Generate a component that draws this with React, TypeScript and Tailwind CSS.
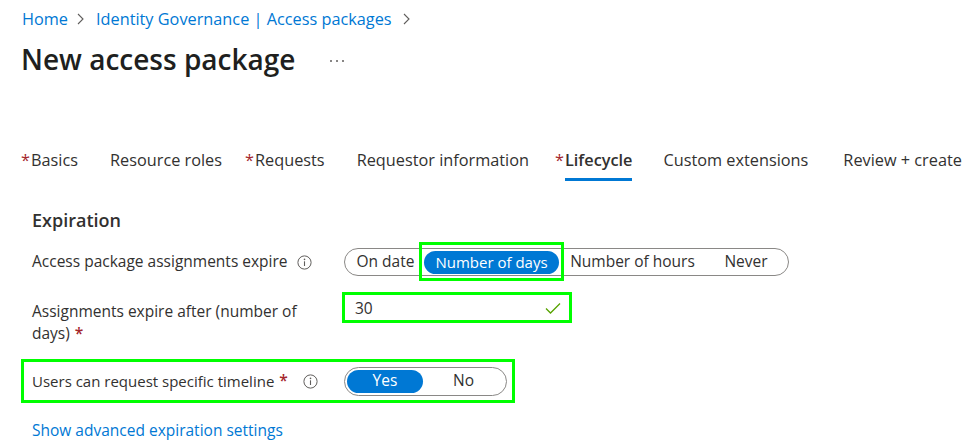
import React from "react";

function Chevron({ ml, mr }: { ml: string; mr: string }) {
  return (
    <svg width="7" height="12" viewBox="0 0 7 12" className={`${ml} ${mr}`}>
      <path d="M1 1 L6 6 L1 11" fill="none" stroke="#605e5c" strokeWidth="1.1" />
    </svg>
  );
}

function Info() {
  return (
    <svg width="15" height="15" viewBox="0 0 15 15">
      <circle cx="7.5" cy="7.5" r="6.6" fill="none" stroke="#605e5c" strokeWidth="1" />
      <line x1="7.5" y1="6.3" x2="7.5" y2="11" stroke="#605e5c" strokeWidth="1.1" />
      <circle cx="7.5" cy="4.4" r="0.8" fill="#605e5c" />
    </svg>
  );
}

const tabs: { label: string; req?: boolean; active?: boolean; ml: string }[] = [
  { label: "Basics", req: true, ml: "ml-0" },
  { label: "Resource roles", ml: "ml-[32px]" },
  { label: "Requests", req: true, ml: "ml-[33px]" },
  { label: "Requestor information", ml: "ml-[32px]" },
  { label: "Lifecycle", req: true, active: true, ml: "ml-[36px]" },
  { label: "Custom extensions", ml: "ml-[31px]" },
  { label: "Review + create", ml: "ml-[35px]" },
];

export default function App() {
  return (
    <div className="w-[978px] h-[447px] overflow-hidden bg-white text-[#323130] font-['Open_Sans','Noto_Sans',sans-serif]">
      {/* Breadcrumb */}
      <div className="flex items-center pl-[22px] pt-[9px] h-[29px] text-[16.3px] leading-[20px] text-[#0078d4]">
        <span>Home</span>
        <Chevron ml="ml-[9px]" mr="mr-[12px]" />
        <span>Identity Governance | Access packages</span>
        <Chevron ml="ml-[11px]" mr="mr-0" />
      </div>

      {/* Title */}
      <div className="flex items-center pl-[21px] mt-[10px] h-[40px]">
        <h1 className="text-[28px] leading-[40px] font-semibold text-[#201f1e]">New access package</h1>
        <div className="ml-[35px] mt-[4px] flex gap-[4px]">
          <span className="w-[2px] h-[2px] rounded-full bg-[#605e5c]" />
          <span className="w-[2px] h-[2px] rounded-full bg-[#605e5c]" />
          <span className="w-[2px] h-[2px] rounded-full bg-[#605e5c]" />
        </div>
      </div>

      {/* Tabs */}
      <div className="flex pl-[31px] mt-[70px] text-[16.3px] leading-[22px]">
        {tabs.map((t) => (
          <div key={t.label} className={`relative pb-[10px] ${t.ml}`}>
            {t.req && (
              <span className="absolute left-[-10px] top-0 text-[#a4262c]">*</span>
            )}
            <span className={t.active ? "font-semibold" : ""}>{t.label}</span>
            {t.active && (
              <span className="absolute left-0 right-0 bottom-0 h-[3px] bg-[#0078d4]" />
            )}
          </div>
        ))}
      </div>

      {/* Content */}
      <div className="pl-[21px] pt-[27px]">
        <div className="pl-[11px] text-[18px] leading-[24px] font-semibold">Expiration</div>

        {/* Row 1 */}
        <div className="flex items-center pl-[11px] mt-[16px] text-[15.5px]">
          <div className="w-[312px] flex items-center">
            <span>Access package assignments expire</span>
            <span className="ml-[9px] flex"><Info /></span>
          </div>
          <div className="flex items-center h-[28px] rounded-full border border-[#8a8886] px-[2px]">
            <span className="w-[77px] text-center">On date</span>
            <span className="relative w-[135px] h-[23px] rounded-full bg-[#0078d4] text-white text-[15px] flex items-center justify-center">
              Number of days
              <span className="absolute left-[-5px] right-[-5px] top-[-9px] bottom-[-7px] border-[3px] border-[#00ff00]" />
            </span>
            <span className="w-[147px] text-center">Number of hours</span>
            <span className="w-[80px] text-center">Never</span>
          </div>
        </div>

        {/* Row 2 */}
        <div className="flex items-start pl-[11px] mt-[18px] text-[15.5px] leading-[22px]">
          <div className="w-[312px] pt-[6px] flex flex-col">
            <span>Assignments expire after (number of</span>
            <div className="flex">
              <span>days)</span>
              <span className="ml-[5px] text-[#a4262c] font-semibold">*</span>
            </div>
          </div>
          <div className="relative w-[226px] h-[27px] border border-[#8e5cc2] flex items-center justify-between pl-[10px] pr-[8px]">
            <span>30</span>
            <svg width="16" height="12" viewBox="0 0 16 12">
              <path d="M1 6.5 L5.5 11 L15 1.5" fill="none" stroke="#57a300" strokeWidth="1.3" />
            </svg>
            <span className="absolute left-[-3px] right-[-3px] top-[-3px] bottom-[-3px] border-[3px] border-[#00ff00]" />
          </div>
        </div>

        {/* Row 3 */}
        <div className="mt-[15px] w-[494px] h-[44px] border-[3px] border-[#00ff00] flex items-center pl-[8px] text-[15.5px]">
          <div className="w-[312px] flex items-center">
            <span className="text-[15px]">Users can request specific timeline</span>
            <span className="ml-[5px] text-[#a4262c] font-semibold">*</span>
            <span className="ml-[15px] flex"><Info /></span>
          </div>
          <div className="flex items-center h-[29px] w-[163px] rounded-full border border-[#8a8886] px-[2px]">
            <span className="w-[76px] h-[23px] rounded-full bg-[#0078d4] text-white flex items-center justify-center">Yes</span>
            <span className="flex-1 text-center">No</span>
          </div>
        </div>

        <div className="pl-[11px] mt-[16px] text-[15.5px] leading-[22px] text-[#0078d4]">Show advanced expiration settings</div>
      </div>
    </div>
  );
}
